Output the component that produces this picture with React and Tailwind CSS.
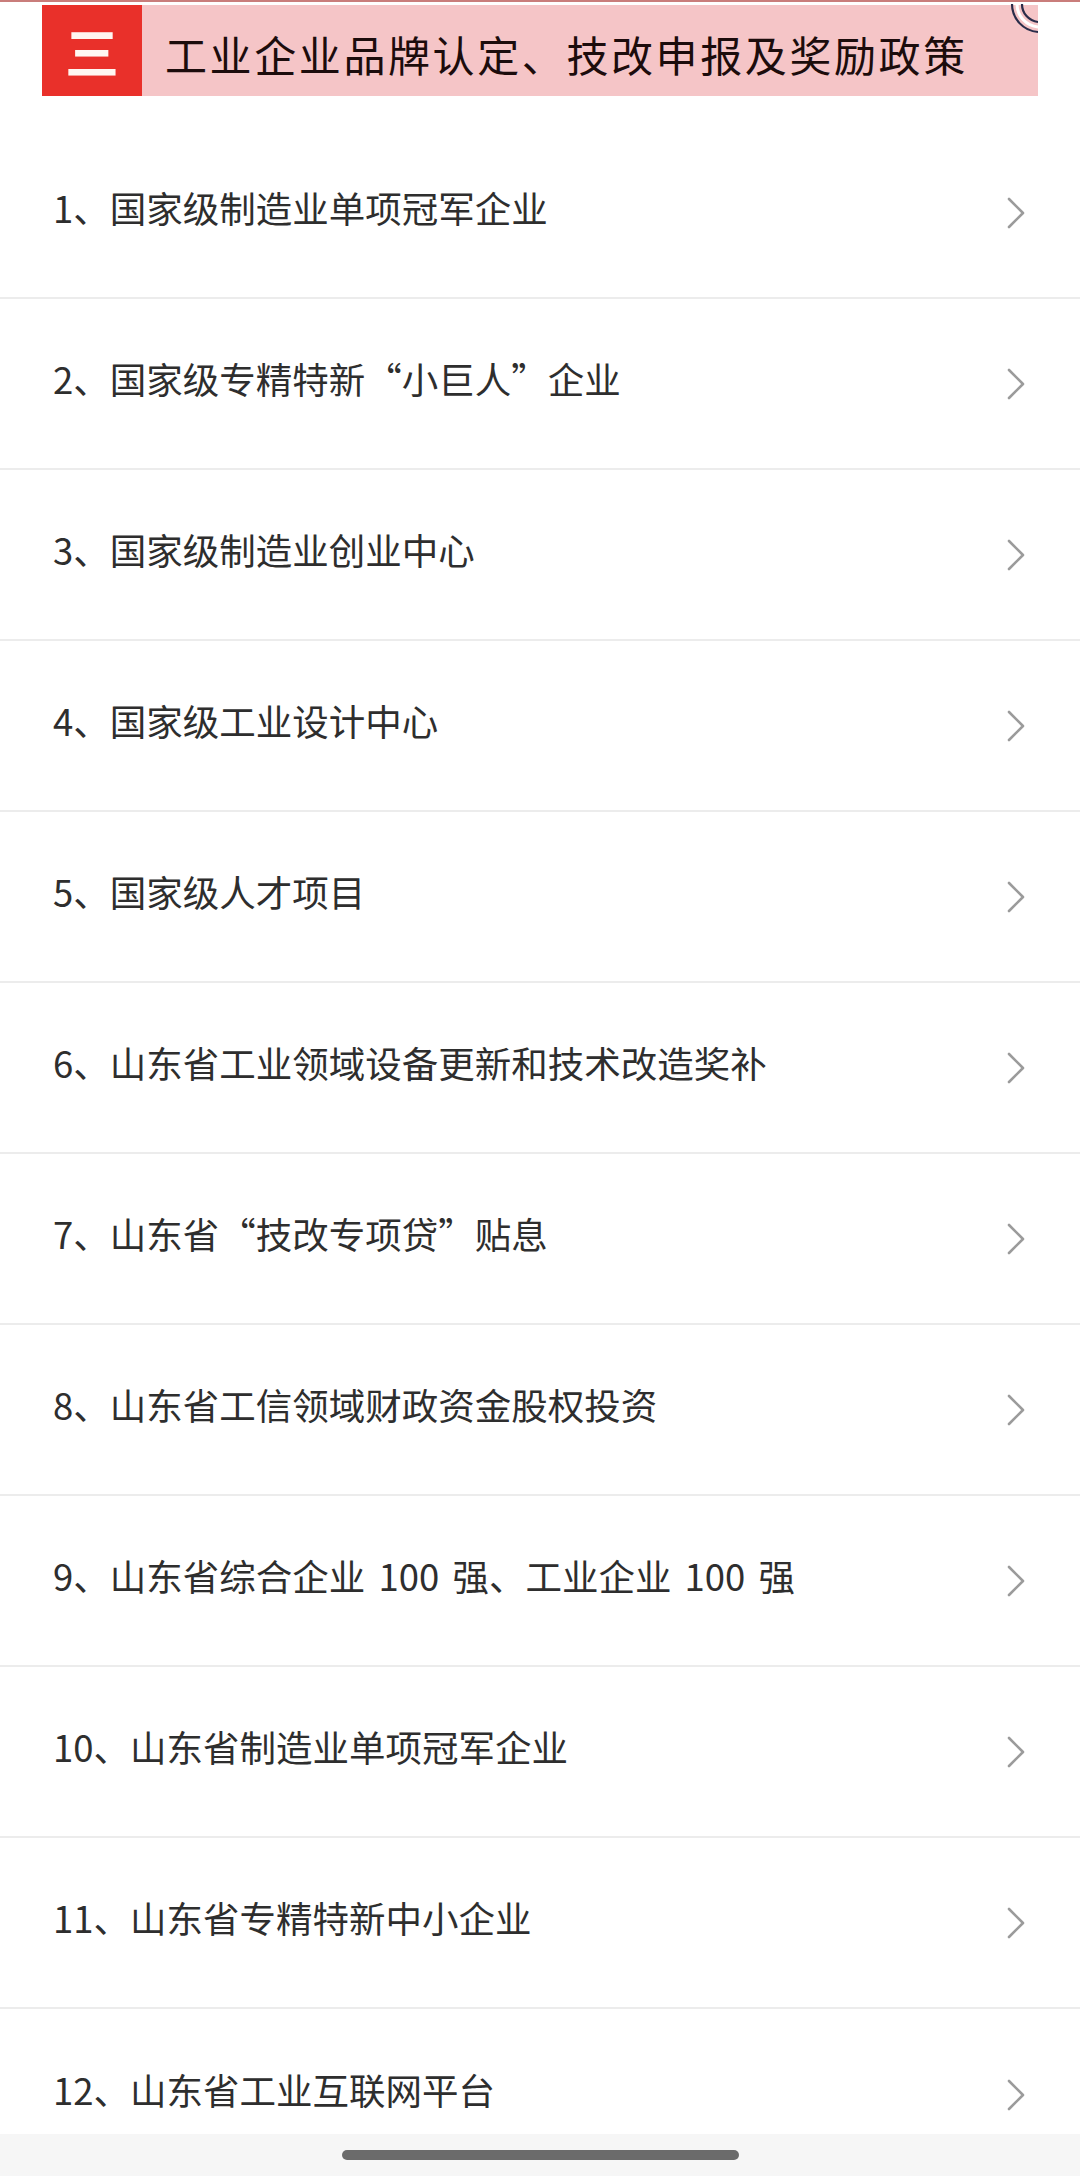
const items = [
  '1、国家级制造业单项冠军企业',
  '2、国家级专精特新“小巨人”企业',
  '3、国家级制造业创业中心',
  '4、国家级工业设计中心',
  '5、国家级人才项目',
  '6、山东省工业领域设备更新和技术改造奖补',
  '7、山东省“技改专项贷”贴息',
  '8、山东省工信领域财政资金股权投资',
  '9、山东省综合企业 100 强、工业企业 100 强',
  '10、山东省制造业单项冠军企业',
  '11、山东省专精特新中小企业',
  '12、山东省工业互联网平台',
]

function Row({ label, last }) {
  return (
    <div
      className={`h-[171px] flex items-center justify-between pl-[53px] pr-[53px] ${
        last ? '' : 'border-b-2 border-[#ececec]'
      }`}
    >
      <span className="mb-[9px] text-[36.5px] leading-none text-[#2e2e2e] [word-spacing:5px]">{label}</span>
      <svg width="22" height="34" viewBox="0 0 22 34" fill="none">
        <path d="M4 3 L18 17 L4 31" stroke="#9b9b9b" strokeWidth="2.6" strokeLinecap="round" strokeLinejoin="round" />
      </svg>
    </div>
  )
}

export default function App() {
  return (
    <div
      className="relative w-[1080px] h-[2176px] overflow-hidden bg-white"
      style={{ fontFamily: '"Noto Sans CJK SC", "Noto Sans", sans-serif' }}
    >
      {/* ── top strip ── */}
      <div className="h-[2px] bg-[#c97d7b]" />

      {/* ── section banner ── */}
      <div className="mt-[3px] mx-[42px] h-[91px] flex bg-[#f5c5c7] relative">
        <div className="w-[100px] bg-[#e9302a] flex items-center justify-center">
          <span className="text-[54px] font-bold leading-none text-[#fff7f2]">三</span>
        </div>
        <div className="flex items-center pl-[23px] pt-[7px]">
          <span className="text-[42px] leading-none tracking-[2.6px] text-[#1c0c0c]">
            工业企业品牌认定、技改申报及奖励政策
          </span>
        </div>
        <svg className="absolute right-0 top-[-3px]" width="28" height="34" viewBox="0 0 28 34" fill="none">
          <path d="M2 2 A28 28 0 0 0 28 30" stroke="#2a2d4a" strokeWidth="2.2" />
          <path d="M12 2 A18 18 0 0 0 28 20" stroke="#2a2d4a" strokeWidth="2.2" />
          <path d="M7 2 A23 23 0 0 0 28 25" stroke="#ffffff" strokeWidth="3" />
        </svg>
      </div>

      {/* ── list ── */}
      <div className="mt-[32px]">
        {items.map((label, i) => (
          <Row key={i} label={label} last={i === items.length - 1} />
        ))}
      </div>

      {/* ── home indicator ── */}
      <div className="absolute bottom-0 left-0 right-0 h-[42px] bg-[#f6f6f6] flex justify-center pt-[16px]">
        <div className="w-[397px] h-[10px] rounded-full bg-[#6b6b6b]" />
      </div>
    </div>
  )
}
